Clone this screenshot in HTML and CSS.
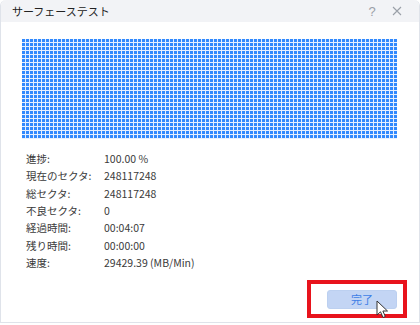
FILE: index.html
```html
<!DOCTYPE html>
<html lang="ja">
<head>
    <meta charset="UTF-8">
    <title>サーフェーステスト</title>
    <link rel="stylesheet" href="styles.css">
</head>
<body>
    <div class="window">
        <div class="titlebar">
            <span class="title">サーフェーステスト</span>
            <span class="tb-btn help">?</span>
            <span class="tb-btn close">
                <svg width="10" height="10" viewBox="0 0 10 10"><path d="M1 1L9 9M9 1L1 9" stroke="#9aa0a8" stroke-width="1.1" fill="none"/></svg>
            </span>
        </div>
        <div class="content">
            <div class="blocks"></div>
            <div class="stats">
                <span>進捗:</span><span>100.00 %</span>
                <span>現在のセクタ:</span><span>248117248</span>
                <span>総セクタ:</span><span>248117248</span>
                <span>不良セクタ:</span><span>0</span>
                <span>経過時間:</span><span>00:04:07</span>
                <span>残り時間:</span><span>00:00:00</span>
                <span>速度:</span><span>29429.39 (MB/Min)</span>
            </div>
            <div class="footer">
                <div class="highlight">
                    <button class="done">完了</button>
                    <svg class="cursor" width="13" height="19" viewBox="0 0 13 19">
                        <path d="M1 1L1 15L4.5 11.8L7 17.5L9.3 16.5L6.9 11L11.5 11Z" fill="#fff" stroke="#333" stroke-width="1" stroke-linejoin="round"/>
                    </svg>
                </div>
            </div>
        </div>
    </div>
</body>
</html>
```

FILE: styles.css
```css
html, body {
    margin: 0;
    padding: 0;
    background: #ffffff;
}

body {
    font-family: "Noto Sans CJK JP", "Noto Sans", sans-serif;
    color: #333;
}

.window {
    width: 420px;
    height: 323px;
    box-sizing: border-box;
    border: 1px solid #dfe3ea;
    border-top: none;
    border-radius: 6px 6px 0 0;
    display: flex;
    flex-direction: column;
    overflow: hidden;
}

.titlebar {
    height: 22px;
    flex-shrink: 0;
    background: #f2f3f6;
    display: flex;
    align-items: center;
    padding: 0 11px 0 11px;
}

.title {
    font-size: 11px;
    color: #222;
    flex: 1;
}

.tb-btn {
    color: #9aa0a8;
    font-size: 13px;
    font-family: "Liberation Sans", sans-serif;
    width: 24px;
    text-align: center;
    display: flex;
    justify-content: center;
}

.close {
    width: 22px;
    margin-left: 2px;
}

.content {
    flex: 1;
    display: flex;
    flex-direction: column;
    padding: 17px 0 0 21px;
}

/* セクタマップ: 3px の青いブロックと 1px の明るい隙間 */
.blocks {
    width: 375px;
    height: 100px;
    background-color: #e6f0ff;
    background-image:
        linear-gradient(90deg, transparent 3px, #e6f0ff 3px),
        linear-gradient(180deg, #3189fd 3px, #e6f0ff 3px);
    background-size: 4px 4px;
}

.stats {
    display: grid;
    grid-template-columns: 78px auto;
    grid-auto-rows: 17.3px;
    align-items: center;
    margin: 11px 0 0 4px;
    font-size: 10.5px;
    color: #3a3a3a;
}

.footer {
    flex: 1;
    display: flex;
    justify-content: flex-end;
    align-items: flex-end;
    padding: 0 12px 4px 0;
}

.highlight {
    position: relative;
    width: 86px;
    height: 30px;
    border: 4px solid #e8131c;
    display: flex;
    align-items: center;
    justify-content: flex-end;
    padding-right: 6px;
}

.done {
    width: 70px;
    height: 19px;
    border: 1px solid #bcd0f0;
    border-radius: 3px;
    background: #c3d5f4;
    color: #3f7fe6;
    font-family: "Noto Sans CJK JP", sans-serif;
    font-size: 11px;
    padding: 0;
    line-height: 17px;
}

.cursor {
    position: absolute;
    left: 65px;
    top: 16px;
}
```
